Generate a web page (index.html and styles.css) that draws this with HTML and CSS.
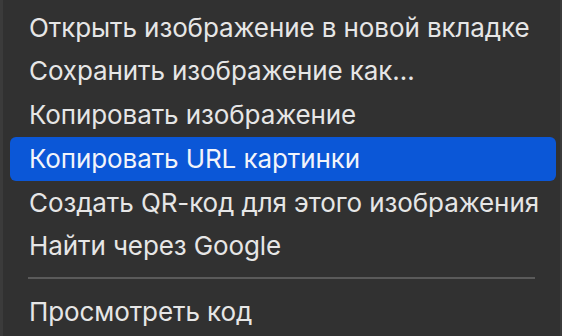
FILE: index.html
```html
<!DOCTYPE html>
<html lang="ru">
<head>
<meta charset="utf-8">
<link rel="stylesheet" href="styles.css">
</head>
<body>
<div class="menu">
  <div class="item">Открыть изображение в новой вкладке</div>
  <div class="item">Сохранить изображение как…</div>
  <div class="item">Копировать изображение</div>
  <div class="item active">Копировать URL картинки</div>
  <div class="item">Создать QR-код для этого изображения</div>
  <div class="item">Найти через Google</div>
  <div class="sep"></div>
  <div class="item">Просмотреть код</div>
</div>
</body>
</html>
```
FILE: styles.css
```css
html, body {
  margin: 0;
  padding: 0;
  background: #313131;
}
.menu {
  box-sizing: border-box;
  width: 562px;
  height: 336px;
  overflow: hidden;
  background: #313131;
  border-left: 3px solid #3b3b3b;
  border-right: 2px solid #3b3b3b;
  padding: 5.5px 4px 0 7px;
  display: flex;
  flex-direction: column;
  font-family: Inter, "Noto Sans", sans-serif;
  font-size: 26px;
  letter-spacing: -0.1px;
  color: #e6e6e6;
}
.item {
  height: 43.8px;
  line-height: 43.8px;
  padding-left: 19px;
  border-radius: 6px;
  white-space: nowrap;
  flex: none;
}
.item.active {
  background: #0b57d7;
  color: #f2f4fa;
}
.sep {
  flex: none;
  height: 2px;
  background: #5a5a5a;
  margin: 9.2px 21px 11px 18px;
}
```
